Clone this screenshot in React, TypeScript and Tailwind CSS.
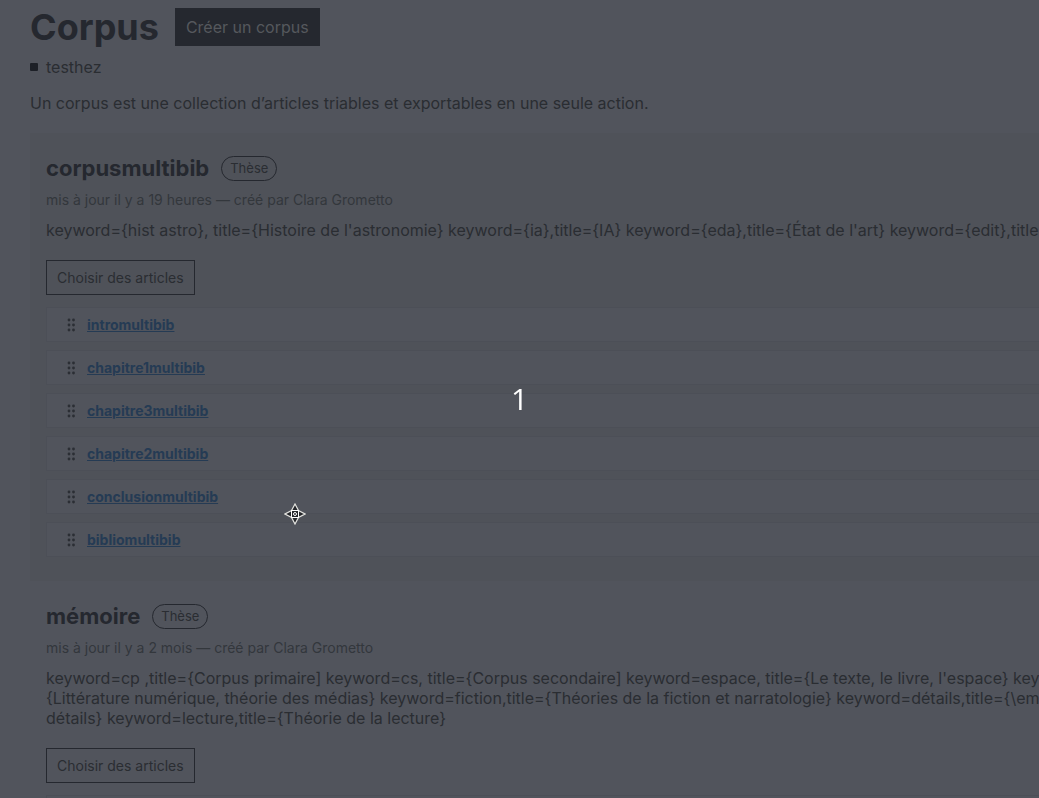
interface Corpus {
  name: string;
  type: string;
  meta: string;
  description: string[];
  articles: string[];
}

const corpora: Corpus[] = [
  {
    name: "corpusmultibib",
    type: "Thèse",
    meta: "mis à jour il y a 19 heures — créé par Clara Grometto",
    description: [
      "keyword={hist astro}, title={Histoire de l'astronomie} keyword={ia},title={IA} keyword={eda},title={État de l'art} keyword={edit},title=",
    ],
    articles: [
      "intromultibib",
      "chapitre1multibib",
      "chapitre3multibib",
      "chapitre2multibib",
      "conclusionmultibib",
      "bibliomultibib",
    ],
  },
  {
    name: "mémoire",
    type: "Thèse",
    meta: "mis à jour il y a 2 mois — créé par Clara Grometto",
    description: [
      "keyword=cp ,title={Corpus primaire] keyword=cs, title={Corpus secondaire] keyword=espace, title={Le texte, le livre, l'espace} keyw",
      "{Littérature numérique, théorie des médias} keyword=fiction,title={Théories de la fiction et narratologie} keyword=détails,title={\\emp",
      "détails} keyword=lecture,title={Théorie de la lecture}",
    ],
    articles: [""],
  },
];

function DragHandle() {
  return (
    <svg width="8" height="14" viewBox="0 0 8 14" className="shrink-0 fill-[#2b2e34]" aria-hidden="true">
      {[2, 7, 12].map((y) => (
        <g key={y}>
          <circle cx="2" cy={y} r="1.4" />
          <circle cx="6.5" cy={y} r="1.4" />
        </g>
      ))}
    </svg>
  );
}

function Crosshair() {
  return (
    <svg width="22" height="22" viewBox="0 0 22 22" className="fixed left-[284px] top-[503px]" aria-hidden="true">
      <path
        d="M11 1 L14.5 7.5 L21 11 L14.5 14.5 L11 21 L7.5 14.5 L1 11 L7.5 7.5 Z"
        fill="#25272b"
        stroke="#e4e4e0"
        strokeWidth="1.2"
      />
      <rect x="7.5" y="7.5" width="7" height="7" fill="#25272b" stroke="#fff" />
      <circle cx="11" cy="11" r="1.5" fill="none" stroke="#fff" />
    </svg>
  );
}

function CorpusCard({ corpus }: { corpus: Corpus }) {
  return (
    <section className="overflow-hidden px-4 pt-[22px] pb-6 odd:bg-[#4f5259]">
      {/* Title */}
      <div className="flex items-center gap-3">
        <h2 className="text-[22px] leading-[26px] font-bold text-[#25282f]">{corpus.name}</h2>
        <span className="rounded-full border border-[#25282f] px-2 text-[13px] leading-[23px]">{corpus.type}</span>
      </div>

      <p className="mt-[9px] text-sm leading-5 text-[#33373c]">{corpus.meta}</p>

      <p className="mt-[10px] leading-5 whitespace-nowrap">
        {corpus.description.map((line) => (
          <span key={line} className="block">
            {line}
          </span>
        ))}
      </p>

      <button type="button" className="mt-5 block border border-[#25282f] px-[10px] text-sm leading-[33px]">
        Choisir des articles
      </button>

      {/* Articles */}
      <ul className="mt-3 -mr-4 space-y-2">
        {corpus.articles.map((article) => (
          <li
            key={article}
            className="flex h-[35px] items-center gap-3 border border-r-0 border-[#4c4f57] bg-[#51545c] pl-5"
          >
            <DragHandle />
            <a href="#" className="text-sm font-bold text-[#253b54] underline">
              {article}
            </a>
          </li>
        ))}
      </ul>
    </section>
  );
}

export default function App() {
  return (
    <div className="h-screen overflow-hidden bg-[#51545c] font-['Inter',sans-serif] text-base text-[#2a2d32]">
      <main className="pt-2 pl-[30px]">
        <header className="flex items-center gap-4">
          <h1 className="text-4xl leading-[38px] font-bold text-[#25282f]">Corpus</h1>
          <button type="button" className="bg-[#25282f] px-[11px] leading-[38px] text-[#55585d]">
            Créer un corpus
          </button>
        </header>

        <div className="mt-[9px] flex items-center gap-2 leading-6">
          <span className="size-2 rounded-[1px] bg-[#1d2027]" />
          testhez
        </div>

        <p className="mt-3 mb-[18px] leading-6">
          Un corpus est une collection d’articles triables et exportables en une seule action.
        </p>

        <div>
          {corpora.map((corpus) => (
            <CorpusCard key={corpus.name} corpus={corpus} />
          ))}
        </div>
      </main>

      {/* Countdown shown over the page */}
      <div className="pointer-events-none fixed inset-0 flex items-center justify-center font-['Open_Sans',sans-serif] text-3xl font-normal text-white">
        1
      </div>
      <Crosshair />
    </div>
  );
}
